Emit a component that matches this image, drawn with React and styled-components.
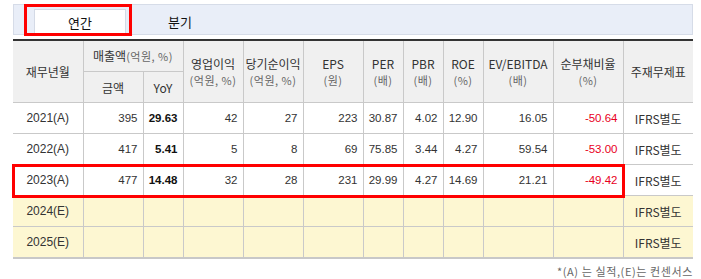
import React from "react";
import styled, { createGlobalStyle, css } from "styled-components";

const GlobalStyle = createGlobalStyle`
  body {
    margin: 0;
    background: #fff;
    font-family: "Liberation Sans", "Noto Sans CJK KR", sans-serif;
    color: #333;
  }
`;

const Page = styled.div`
  width: 680px;
  padding: 4px 0 0 13px;
`;

const TabBar = styled.div`
  display: flex;
  align-items: flex-end;
  gap: 8px;
  height: 31px;
  padding-left: 20px;
  box-sizing: border-box;
  background: #e9eef8;
  border: 1px solid #d6dce8;
`;

const Tab = styled.div`
  position: relative;
  width: 92px;
  height: 25px;
  box-sizing: border-box;
  display: flex;
  align-items: center;
  justify-content: center;
  font-family: "Noto Sans CJK KR", sans-serif;
  font-size: 13px;
  color: #111;
  ${(p) =>
    p.$active &&
    css`
      background: #fff;
      border: 1px solid #d4dae6;
      border-bottom: none;
    `}
  ${(p) =>
    p.$marked &&
    css`
      &::after {
        content: "";
        position: absolute;
        left: -11px;
        right: -7px;
        top: -6px;
        bottom: -2px;
        border: 3px solid #f00;
      }
    `}
`;

const Table = styled.table`
  width: 680px;
  margin-top: 4px;
  border-collapse: collapse;
  table-layout: fixed;
  border-top: 2px solid #333;
  border-bottom: 2px solid #c8c8c8;
`;

const Th = styled.th`
  height: 30px;
  padding: 0;
  background: #f0f0f0;
  border-left: 1px solid #c9c9c9;
  border-bottom: 1px solid #c9c9c9;
  font-family: "Noto Sans CJK KR", sans-serif;
  font-weight: normal;
  font-size: 12px;
  line-height: 17px;
  color: #333;
  text-align: center;
  &:first-child {
    border-left: none;
  }
`;

const SubTh = styled(Th)`
  &:first-child {
    border-left: 1px solid #c9c9c9;
  }
`;

const Unit = styled.span`
  display: ${(p) => (p.$inline ? "inline" : "block")};
  font-size: 11px;
  letter-spacing: 0.5px;
  color: #666;
`;

const Row = styled.tr`
  background: ${(p) => (p.$estimate ? "#fdf7d2" : "#fff")};
`;

const Td = styled.td`
  height: 30px;
  padding: 0 5px;
  border-left: 1px solid #c9c9c9;
  border-bottom: 1px solid #c9c9c9;
  font-size: 11.5px;
  text-align: right;
  font-weight: ${(p) => (p.$bold ? "bold" : "normal")};
  color: ${(p) => (p.$neg ? "#e8001c" : p.$bold ? "#111" : "#333")};
  white-space: nowrap;
  &:first-child {
    border-left: none;
  }
`;

const PeriodCell = styled(Td)`
  position: relative;
  text-align: center;
  font-size: 12px;
  ${(p) =>
    p.$marked &&
    css`
      &::after {
        content: "";
        position: absolute;
        left: -1px;
        top: -1px;
        width: 613px;
        height: 34px;
        box-sizing: border-box;
        border: 3px solid #f00;
        pointer-events: none;
      }
    `}
`;

const StatementCell = styled(Td)`
  text-align: center;
  font-family: "Noto Sans CJK KR", sans-serif;
  font-size: 12px;
  color: #333;
`;

const Note = styled.div`
  margin-top: 4px;
  text-align: right;
  font-family: "Noto Sans CJK KR", sans-serif;
  font-size: 11px;
  letter-spacing: 0.6px;
  color: #666;
`;

const cols = [70, 60, 40, 60, 60, 60, 40, 40, 40, 70, 70, 70];

const rows = [
  { period: "2021(A)", v: ["395", "29.63", "42", "27", "223", "30.87", "4.02", "12.90", "16.05", "-50.64"] },
  { period: "2022(A)", v: ["417", "5.41", "5", "8", "69", "75.85", "3.44", "4.27", "59.54", "-53.00"] },
  { period: "2023(A)", v: ["477", "14.48", "32", "28", "231", "29.99", "4.27", "14.69", "21.21", "-49.42"], marked: true },
  { period: "2024(E)", v: Array(10).fill(""), estimate: true },
  { period: "2025(E)", v: Array(10).fill(""), estimate: true },
];

export default function App() {
  return (
    <Page>
      <GlobalStyle />
      <TabBar>
        <Tab $active $marked>연간</Tab>
        <Tab>분기</Tab>
      </TabBar>
      <Table>
        <colgroup>
          {cols.map((w, i) => (
            <col key={i} style={{ width: w }} />
          ))}
        </colgroup>
        <thead>
          <tr>
            <Th rowSpan={2}>재무년월</Th>
            <Th colSpan={2}>
              매출액<Unit $inline>(억원, %)</Unit>
            </Th>
            <Th rowSpan={2}>
              영업이익<Unit>(억원, %)</Unit>
            </Th>
            <Th rowSpan={2}>
              당기순이익<Unit>(억원, %)</Unit>
            </Th>
            <Th rowSpan={2}>
              EPS<Unit>(원)</Unit>
            </Th>
            <Th rowSpan={2}>
              PER<Unit>(배)</Unit>
            </Th>
            <Th rowSpan={2}>
              PBR<Unit>(배)</Unit>
            </Th>
            <Th rowSpan={2}>
              ROE<Unit>(%)</Unit>
            </Th>
            <Th rowSpan={2}>
              EV/EBITDA<Unit>(배)</Unit>
            </Th>
            <Th rowSpan={2}>
              순부채비율<Unit>(%)</Unit>
            </Th>
            <Th rowSpan={2}>주재무제표</Th>
          </tr>
          <tr>
            <SubTh>금액</SubTh>
            <SubTh>YoY</SubTh>
          </tr>
        </thead>
        <tbody>
          {rows.map((r) => (
            <Row key={r.period} $estimate={r.estimate}>
              <PeriodCell $marked={r.marked}>{r.period}</PeriodCell>
              {r.v.map((val, i) => (
                <Td key={i} $bold={i === 1} $neg={i === 9}>
                  {val}
                </Td>
              ))}
              <StatementCell>IFRS별도</StatementCell>
            </Row>
          ))}
        </tbody>
      </Table>
      <Note>*(A) 는 실적,(E)는 컨센서스</Note>
    </Page>
  );
}
